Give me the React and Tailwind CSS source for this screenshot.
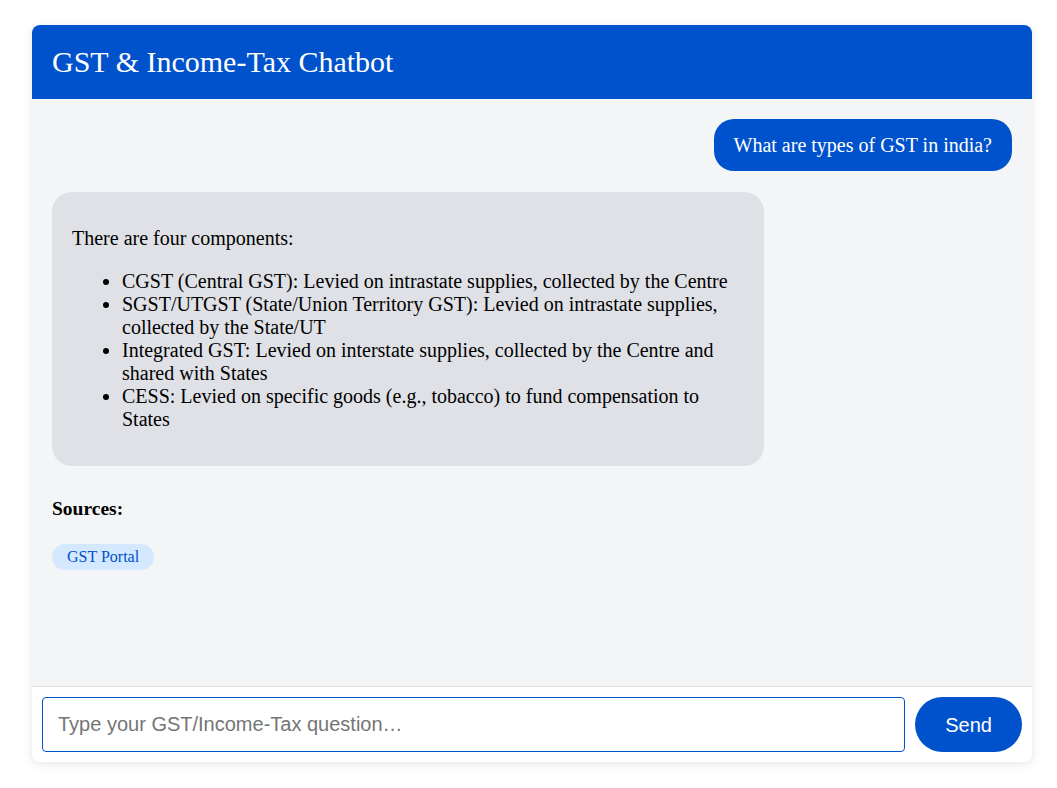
const serif = { fontFamily: '"Liberation Serif", "Times New Roman", serif' };
const sans = { fontFamily: '"Liberation Sans", Arial, sans-serif' };

const components = [
  'CGST (Central GST): Levied on intrastate supplies, collected by the Centre',
  'SGST/UTGST (State/Union Territory GST): Levied on intrastate supplies, collected by the State/UT',
  'Integrated GST: Levied on interstate supplies, collected by the Centre and shared with States',
  'CESS: Levied on specific goods (e.g., tobacco) to fund compensation to States',
];

export default function App() {
  return (
    <div className="min-h-screen bg-white pt-[25px] pl-8" style={serif}>
      <div className="w-[1000px] h-[737px] flex flex-col rounded-lg bg-white shadow-[0_2px_10px_rgba(0,0,0,0.1)] overflow-hidden">
        <header className="bg-[#0052cc] px-5 h-[74px] flex items-center">
          <h1 className="text-[30px] leading-[34px] text-white">GST &amp; Income-Tax Chatbot</h1>
        </header>

        <main className="flex-1 bg-[#f4f5f7] px-5 pt-5 flex flex-col">
          <div className="flex justify-end">
            <div className="bg-[#0052cc] text-white text-[20px] leading-[24px] px-5 py-[14px] rounded-[20px]">
              What are types of GST in india?
            </div>
          </div>

          <div className="mt-[21px] max-w-[712px] bg-[#dfe1e6] rounded-[20px] px-5 py-[15px] text-[20px] leading-[23px] text-black">
            <p className="my-5">There are four components:</p>
            <ul className="list-disc pl-[50px] my-5">
              {components.map((c) => (
                <li key={c}>{c}</li>
              ))}
            </ul>
          </div>

          <p className="mt-[31px] text-[19.5px] leading-[23px] font-bold text-black">Sources:</p>
          <div className="mt-6 flex">
            <span className="bg-[#d4e8ff] text-[#0052cc] text-[16px] leading-[18px] px-[15px] py-1 rounded-full">
              GST Portal
            </span>
          </div>
        </main>

        <div className="border-t border-[#dddddd] bg-white p-[10px] flex gap-[10px]">
          <input
            type="text"
            placeholder="Type your GST/Income-Tax question…"
            className="flex-1 h-[55px] border border-[#0052cc] rounded px-[15px] text-[20px] outline-none placeholder:text-[#757575]"
            style={sans}
          />
          <button
            type="button"
            className="h-[55px] px-[30px] rounded-full bg-[#0052cc] text-white text-[20px]"
            style={sans}
          >
            Send
          </button>
        </div>
      </div>
    </div>
  );
}
